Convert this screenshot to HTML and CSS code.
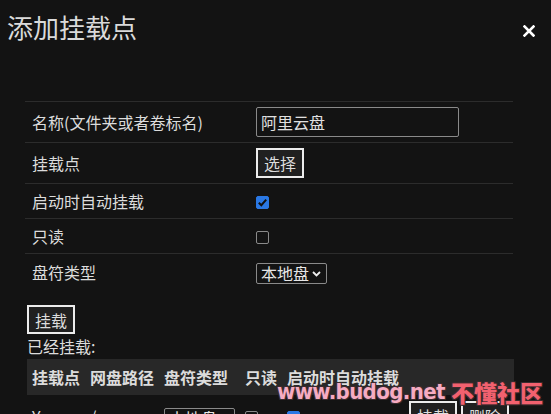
FILE: index.html
```html
<!DOCTYPE html>
<html lang="zh-CN">
<head>
    <meta charset="UTF-8">
    <meta name="viewport" content="width=device-width, initial-scale=1.0">
    <title>添加挂载点</title>
    <link rel="stylesheet" href="styles.css">
</head>
<body>
    <div class="dialog">
        <div class="dialog-header">
            <h2 class="dialog-title">添加挂载点</h2>
            <button class="close-btn" type="button" aria-label="关闭">
                <svg width="12" height="12" viewBox="0 0 12 12">
                    <path d="M1.5 1.5 L10.5 10.5 M10.5 1.5 L1.5 10.5" stroke="#fff" stroke-width="2.6" stroke-linecap="square"/>
                </svg>
            </button>
        </div>
        <div class="dialog-body">
            <table class="form-table">
                <tr>
                    <td class="label-cell">名称(文件夹或者卷标名)</td>
                    <td><input type="text" class="text-input" value="阿里云盘"></td>
                </tr>
                <tr>
                    <td class="label-cell">挂载点</td>
                    <td><button type="button" class="btn">选择</button></td>
                </tr>
                <tr>
                    <td class="label-cell">启动时自动挂载</td>
                    <td><input type="checkbox" class="check" checked></td>
                </tr>
                <tr>
                    <td class="label-cell">只读</td>
                    <td><input type="checkbox" class="check"></td>
                </tr>
                <tr>
                    <td class="label-cell">盘符类型</td>
                    <td>
                        <select class="drive-select">
                            <option>本地盘</option>
                            <option>网络盘</option>
                        </select>
                    </td>
                </tr>
            </table>

            <button type="button" class="btn mount-btn">挂载</button>
            <div class="mounted-label">已经挂载:</div>

            <table class="mount-table">
                <thead>
                    <tr>
                        <th>挂载点</th>
                        <th>网盘路径</th>
                        <th>盘符类型</th>
                        <th>只读</th>
                        <th>启动时自动挂载</th>
                        <th></th>
                    </tr>
                </thead>
                <tbody>
                    <tr>
                        <td>Y:</td>
                        <td>/</td>
                        <td>
                            <select class="drive-select">
                                <option>本地盘</option>
                                <option>网络盘</option>
                            </select>
                        </td>
                        <td><input type="checkbox" class="check"></td>
                        <td><input type="checkbox" class="check" checked></td>
                        <td class="actions">
                            <button type="button" class="btn">挂载</button>
                            <button type="button" class="btn">删除</button>
                        </td>
                    </tr>
                </tbody>
            </table>
        </div>
    </div>

    <div class="watermark">
        <span class="wm-site">www.budog.net</span>
        <span class="wm-name">不懂社区</span>
    </div>
</body>
</html>
```

FILE: styles.css
```css
body {
    margin: 0;
    background-color: #131313;
    color: #dcdcdc;
    font-family: "Noto Sans CJK SC", "Noto Sans", sans-serif;
    font-size: 16px;
    line-height: 24px;
    height: 414px;
    overflow: hidden;
    position: relative;
}
.dialog-header {
    display: flex;
    justify-content: space-between;
    align-items: flex-start;
    padding: 7px 16px 0 7px;
}
.dialog-title {
    margin: 0;
    font-size: 26px;
    line-height: 39px;
    font-weight: normal;
    color: #dadada;
}
.close-btn {
    margin-top: 18px;
    padding: 0;
    border: none;
    background: none;
    width: 12px;
    height: 12px;
    display: flex;
    cursor: pointer;
}
.dialog-body {
    padding: 55px 38px 0 27px;
}
.form-table {
    width: 488px;
    margin-left: -2px;
    border-collapse: collapse;
}
.form-table td {
    border-top: 1px solid #2c2c2c;
    padding: 5px 0;
    vertical-align: middle;
}
.form-table .label-cell {
    width: 217px;
    padding-left: 7px;
    padding-right: 7px;
}
.text-input {
    box-sizing: border-box;
    width: 203px;
    height: 30px;
    padding: 0 4px;
    border: 1px solid #8a8a8a;
    border-radius: 2px;
    background-color: #131313;
    color: #e0e0e0;
    font-family: inherit;
    font-size: 16px;
    outline: none;
    display: block;
}
.btn {
    box-sizing: border-box;
    height: 30px;
    padding: 0 6px;
    border: 2px solid #ececec;
    background-color: #202020;
    color: #dcdcdc;
    font-family: inherit;
    font-size: 16px;
    line-height: 24px;
    cursor: pointer;
    vertical-align: middle;
}
.check {
    appearance: none;
    -webkit-appearance: none;
    box-sizing: border-box;
    width: 13px;
    height: 13px;
    margin: 0;
    border: 1px solid #8a8a8a;
    border-radius: 2px;
    background-color: #131313;
    vertical-align: middle;
    position: relative;
    top: -1px;
}
.check:checked {
    border-color: #2a78e4;
    background-color: #2a78e4;
    background-image: url("data:image/svg+xml,%3Csvg xmlns='http://www.w3.org/2000/svg' viewBox='0 0 13 13'%3E%3Cpath d='M2.8 6.8 L5.3 9.2 L10.2 3.6' fill='none' stroke='%23111' stroke-width='2'/%3E%3C/svg%3E");
    background-size: 13px 13px;
    background-position: center;
}
.drive-select {
    appearance: none;
    -webkit-appearance: none;
    box-sizing: border-box;
    width: 71px;
    height: 21px;
    padding: 0 0 0 4px;
    border: 1px solid #8a8a8a;
    border-radius: 2px;
    background-color: #131313;
    background-image: url("data:image/svg+xml,%3Csvg xmlns='http://www.w3.org/2000/svg' viewBox='0 0 9 6'%3E%3Cpath d='M1 1 L4.5 4.5 L8 1' fill='none' stroke='%23eee' stroke-width='1.8'/%3E%3C/svg%3E");
    background-repeat: no-repeat;
    background-position: right 5px center;
    background-size: 9px 6px;
    color: #e6e6e6;
    font-family: inherit;
    font-size: 16px;
    line-height: 19px;
    vertical-align: middle;
}
.mount-btn {
    display: block;
    margin-top: 16px;
    height: 29px;
}
.mounted-label {
    line-height: 24px;
}
.mount-table {
    border-collapse: collapse;
    margin-top: 1px;
}
.mount-table th {
    background-color: #282828;
    font-weight: bold;
    text-align: left;
    padding: 6px 5px;
    white-space: nowrap;
}
.mount-table td {
    padding: 6px 5px;
    white-space: nowrap;
    vertical-align: middle;
}
.mount-table .actions .btn {
    height: 30px;
}
.watermark {
    position: absolute;
    left: 277px;
    top: 378px;
    display: flex;
    align-items: center;
    gap: 6px;
    font-weight: 900;
    line-height: 28px;
    text-shadow: -1px -1px 0 #3b2b2e, 1px -1px 0 #3b2b2e, -1px 1px 0 #3b2b2e, 1px 1px 0 #3b2b2e;
}
.wm-site {
    font-family: "DejaVu Sans Condensed", "DejaVu Sans", sans-serif;
    font-size: 22px;
    color: #f6abc2;
    letter-spacing: -0.6px;
}
.wm-name {
    font-family: "Noto Sans CJK SC", sans-serif;
    font-size: 23px;
    color: #f2616f;
}
```
